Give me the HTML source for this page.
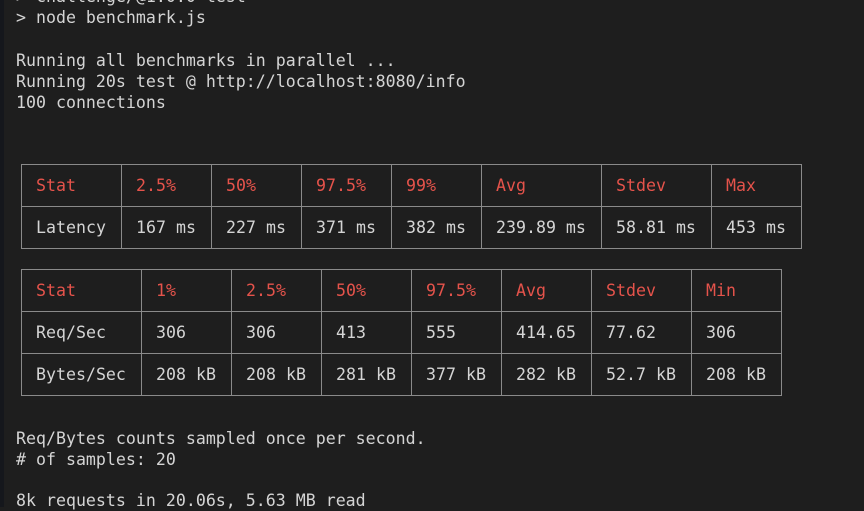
<!DOCTYPE html>
<html><head><meta charset="utf-8"><style>
html,body{margin:0;padding:0}
body{width:864px;height:507px;background:#1e1e1e;position:relative;overflow:hidden;font-family:"DejaVu Sans Mono","Liberation Mono",monospace;font-size:16.6px;color:#d4d4d4}
.strip{position:absolute;left:0;top:0;width:4px;height:507px;background:#15171c}
.l{position:absolute;left:16px;white-space:pre;line-height:20px}
table{position:absolute;left:21px;border-collapse:collapse}
td{border:1px solid #8a8a8a;padding:0 0 0 14px;height:42px;white-space:pre;box-sizing:border-box}
.r td{color:#e5534b}
</style></head><body>
<div class="strip"></div>
<div class="l" style="top:-13px">&gt; challenge/@1.0.0 test</div>
<div class="l" style="top:8px">&gt; node benchmark.js</div>
<div class="l" style="top:51px">Running all benchmarks in parallel ...</div>
<div class="l" style="top:72px">Running 20s test @ http://localhost:8080/info</div>
<div class="l" style="top:93px">100 connections</div>
<table style="top:164px">
<tr class="r"><td style="width:100px">Stat</td><td style="width:90px">2.5%</td><td style="width:90px">50%</td><td style="width:90px">97.5%</td><td style="width:90px">99%</td><td style="width:120px">Avg</td><td style="width:110px">Stdev</td><td style="width:90px">Max</td></tr>
<tr><td>Latency</td><td>167 ms</td><td>227 ms</td><td>371 ms</td><td>382 ms</td><td>239.89 ms</td><td>58.81 ms</td><td>453 ms</td></tr>
</table>
<table style="top:269px">
<tr class="r"><td style="width:120px">Stat</td><td style="width:90px">1%</td><td style="width:90px">2.5%</td><td style="width:90px">50%</td><td style="width:90px">97.5%</td><td style="width:90px">Avg</td><td style="width:100px">Stdev</td><td style="width:90px">Min</td></tr>
<tr><td>Req/Sec</td><td>306</td><td>306</td><td>413</td><td>555</td><td>414.65</td><td>77.62</td><td>306</td></tr>
<tr><td>Bytes/Sec</td><td>208 kB</td><td>208 kB</td><td>281 kB</td><td>377 kB</td><td>282 kB</td><td>52.7 kB</td><td>208 kB</td></tr>
</table>
<div class="l" style="top:429px">Req/Bytes counts sampled once per second.</div>
<div class="l" style="top:450px"># of samples: 20</div>
<div class="l" style="top:491px">8k requests in 20.06s, 5.63 MB read</div>
</body></html>
